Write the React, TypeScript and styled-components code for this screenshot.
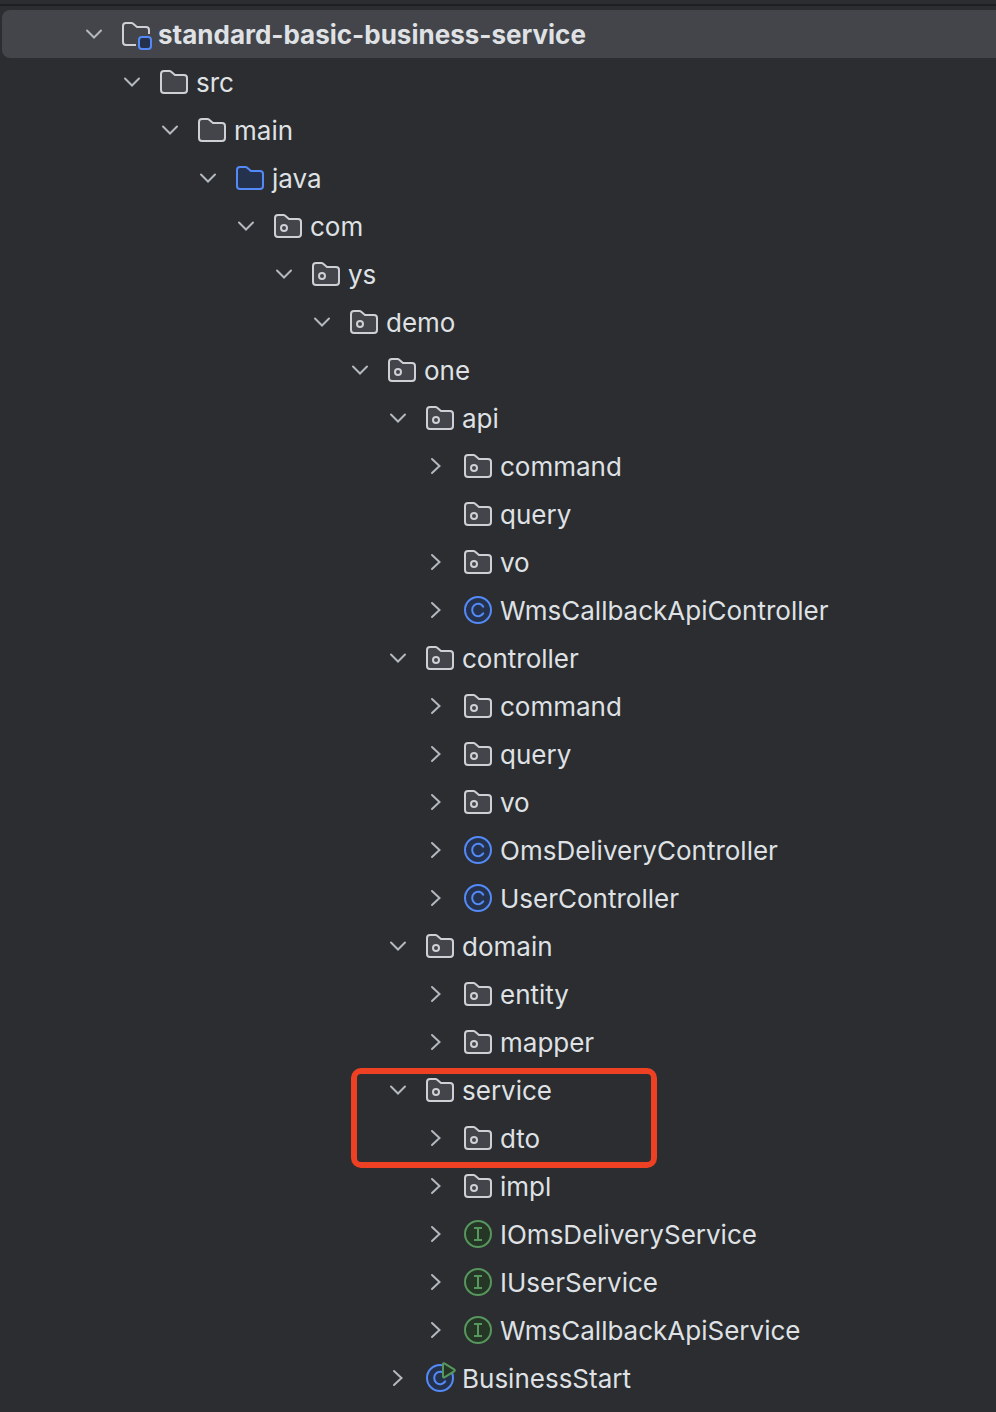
import React, { useState } from "react";
import styled, { createGlobalStyle } from "styled-components";

const color = {
  panel: "#2b2d30",
  divider: "#1e1f22",
  selected: "#43454a",
  text: "#dfe1e5",
  stroke: "#ced0d6",
  chevron: "#b4b8bf",
  blue: "#548af7",
  blueFill: "#25324d",
  green: "#57965c",
  greenFill: "#253627",
  mark: "#ee4023",
};

const GlobalStyle = createGlobalStyle`
  *, *::before, *::after { box-sizing: border-box; }
  body {
    margin: 0;
    background: ${color.panel};
    color: ${color.text};
    font-family: Inter, "Liberation Sans", sans-serif;
  }
`;

const Panel = styled.main`
  min-height: 100vh;
  padding-top: 4px;
  overflow: hidden;
`;

const Divider = styled.div`
  height: 2px;
  background: ${color.divider};
`;

const Tree = styled.ul`
  list-style: none;
  margin: 0;
  padding: 4px 0 10px 2px;
`;

const Branch = styled.ul`
  list-style: none;
  margin: 0;
  padding: 0;
`;

const Item = styled.li`
  position: relative;
`;

const Row = styled.div<{ $depth: number; $selected?: boolean }>`
  display: flex;
  align-items: center;
  height: 48px;
  padding-left: ${(p) => 76 + p.$depth * 38}px;
  border-radius: 8px 0 0 8px;
  background: ${(p) => (p.$selected ? color.selected : "transparent")};
`;

const Toggle = styled.button`
  display: block;
  width: 32px;
  height: 32px;
  margin-right: 10px;
  padding: 0;
  border: 0;
  background: none;
  cursor: pointer;
`;

const ToggleSpace = styled.span`
  width: 32px;
  margin-right: 10px;
`;

const Glyph = styled.svg`
  display: block;
  flex: none;
  width: 32px;
  height: 32px;
  overflow: visible;
`;

const Label = styled.span<{ $bold?: boolean }>`
  padding-top: 2px;
  margin-left: 6px;
  font-size: 26px;
  line-height: 32px;
  font-weight: ${(p) => (p.$bold ? 700 : 400)};
  white-space: nowrap;
`;

const Highlight = styled.div`
  position: absolute;
  top: 2px;
  left: 349px;
  width: 306px;
  height: 100px;
  border: 6px solid ${color.mark};
  border-radius: 10px;
  pointer-events: none;
`;

type Kind = "module" | "folder" | "source" | "package" | "class" | "interface" | "main";

interface TreeNode {
  name: string;
  kind: Kind;
  leaf?: boolean;
  marked?: boolean;
  children?: TreeNode[];
}

const folderPath =
  "M3 8a3 3 0 0 1 3-3h5.6a2 2 0 0 1 1.3.5L17 9h9a3 3 0 0 1 3 3v12a3 3 0 0 1-3 3H6a3 3 0 0 1-3-3z";

function Icon({ kind }: { kind: Kind }) {
  switch (kind) {
    case "module":
      return (
        <Glyph viewBox="0 0 32 32" fill="none" strokeWidth="2" aria-hidden="true">
          <path
            d="M16 27H6a3 3 0 0 1-3-3V8a3 3 0 0 1 3-3h5.600a2 2 0 0 1 1.300.5L17 9h9a3 3 0 0 1 3 3v4"
            stroke={color.stroke}
          />
          <rect x="19" y="19" width="12" height="12" rx="3" fill={color.blueFill} stroke={color.blue} />
        </Glyph>
      );
    case "folder":
    case "source":
    case "package":
      return (
        <Glyph viewBox="0 0 32 32" strokeWidth="2" aria-hidden="true">
          <path
            d={folderPath}
            fill={kind === "source" ? color.blueFill : color.selected}
            stroke={kind === "source" ? color.blue : color.stroke}
          />
          {kind === "package" && <circle cx="12" cy="18" r="3" fill="none" stroke={color.stroke} />}
        </Glyph>
      );
    case "class":
    case "main":
      return (
        <Glyph viewBox="0 0 32 32" strokeWidth="2" aria-hidden="true">
          <circle cx="16" cy="16" r="13" fill={color.blueFill} stroke={color.blue} />
          <path
            d="M21.200 12.600A6 6.200 0 1 0 21.200 19.400"
            fill="none"
            stroke={color.blue}
            strokeLinecap="round"
          />
          {kind === "main" && (
            <path
              d="M19 2v12.600a.9.9 0 0 0 1.400.7L30.400 9.100a.9.9 0 0 0 0-1.500L20.400 1.300A.9.9 0 0 0 19 2z"
              fill={color.greenFill}
              stroke={color.green}
            />
          )}
        </Glyph>
      );
    case "interface":
      return (
        <Glyph viewBox="0 0 32 32" strokeWidth="2" aria-hidden="true">
          <circle cx="16" cy="16" r="13" fill={color.greenFill} stroke={color.green} />
          <path d="M12 10h8M16 10v12M12 22h8" fill="none" stroke={color.green} />
        </Glyph>
      );
  }
}

function Chevron({ open }: { open: boolean }) {
  return (
    <Glyph
      viewBox="0 0 32 32"
      fill="none"
      stroke={color.chevron}
      strokeWidth="2"
      strokeLinecap="round"
      aria-hidden="true"
    >
      <path d={open ? "M9 12.500l7 7 7-7" : "M12 9l7.500 7-7.500 7"} />
    </Glyph>
  );
}

const project: TreeNode = {
  name: "standard-basic-business-service",
  kind: "module",
  children: [
    {
      name: "src",
      kind: "folder",
      children: [
        {
          name: "main",
          kind: "folder",
          children: [
            {
              name: "java",
              kind: "source",
              children: [
                {
                  name: "com",
                  kind: "package",
                  children: [
                    {
                      name: "ys",
                      kind: "package",
                      children: [
                        {
                          name: "demo",
                          kind: "package",
                          children: [
                            {
                              name: "one",
                              kind: "package",
                              children: [
                                {
                                  name: "api",
                                  kind: "package",
                                  children: [
                                    { name: "command", kind: "package" },
                                    { name: "query", kind: "package", leaf: true },
                                    { name: "vo", kind: "package" },
                                    { name: "WmsCallbackApiController", kind: "class" },
                                  ],
                                },
                                {
                                  name: "controller",
                                  kind: "package",
                                  children: [
                                    { name: "command", kind: "package" },
                                    { name: "query", kind: "package" },
                                    { name: "vo", kind: "package" },
                                    { name: "OmsDeliveryController", kind: "class" },
                                    { name: "UserController", kind: "class" },
                                  ],
                                },
                                {
                                  name: "domain",
                                  kind: "package",
                                  children: [
                                    { name: "entity", kind: "package" },
                                    { name: "mapper", kind: "package" },
                                  ],
                                },
                                {
                                  name: "service",
                                  kind: "package",
                                  marked: true,
                                  children: [
                                    { name: "dto", kind: "package" },
                                    { name: "impl", kind: "package" },
                                    { name: "IOmsDeliveryService", kind: "interface" },
                                    { name: "IUserService", kind: "interface" },
                                    { name: "WmsCallbackApiService", kind: "interface" },
                                  ],
                                },
                                { name: "BusinessStart", kind: "main" },
                              ],
                            },
                          ],
                        },
                      ],
                    },
                  ],
                },
              ],
            },
          ],
        },
      ],
    },
  ],
};

function Node({ node, depth }: { node: TreeNode; depth: number }) {
  const [open, setOpen] = useState(Boolean(node.children));
  const root = depth === 0;
  return (
    <Item>
      <Row $depth={depth} $selected={root}>
        {node.leaf ? (
          <ToggleSpace />
        ) : (
          <Toggle type="button" aria-label={node.name} aria-expanded={open} onClick={() => setOpen(!open)}>
            <Chevron open={open} />
          </Toggle>
        )}
        <Icon kind={node.kind} />
        <Label $bold={root}>{node.name}</Label>
      </Row>
      {open && node.children && (
        <Branch>
          {node.children.map((child) => (
            <Node key={child.name} node={child} depth={depth + 1} />
          ))}
        </Branch>
      )}
      {node.marked && <Highlight />}
    </Item>
  );
}

export default function App() {
  return (
    <>
      <GlobalStyle />
      <Panel>
        <Divider />
        <Tree>
          <Node node={project} depth={0} />
        </Tree>
      </Panel>
    </>
  );
}
